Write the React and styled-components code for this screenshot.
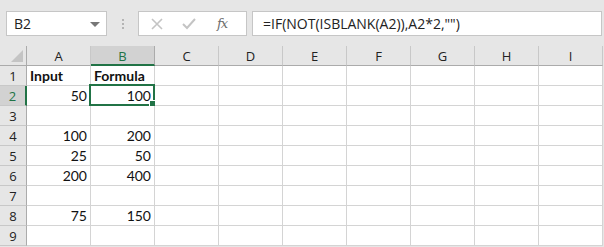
import React from 'react'
import styled, { createGlobalStyle } from 'styled-components'

const GlobalStyle = createGlobalStyle`
  html, body { margin: 0; padding: 0; background: #e6e6e6; }
  body { width: 604px; height: 247px; overflow: hidden; }
`

const GREEN = '#217346'
const COLS = ['A', 'B', 'C', 'D', 'E', 'F', 'G', 'H', 'I']
const ROWS = [
  ['Input', 'Formula'],
  ['50', '100'],
  ['', ''],
  ['100', '200'],
  ['25', '50'],
  ['200', '400'],
  ['', ''],
  ['75', '150'],
  ['', '']
]

const Sheet = styled.div`
  width: 604px;
  height: 247px;
  background: #e6e6e6;
  font-family: "Liberation Sans", Arial, sans-serif;
`

const Toolbar = styled.div`
  height: 46px;
  display: flex;
  align-items: flex-start;
  padding: 11px 2px 0 6px;
  box-sizing: border-box;
`

const NameBox = styled.div`
  width: 101px;
  height: 25px;
  box-sizing: border-box;
  background: #fff;
  border: 1px solid #c6c6c6;
  display: flex;
  align-items: center;
  justify-content: space-between;
  padding: 0 6px 0 7px;
  font-family: "Open Sans", "Noto Sans", sans-serif;
  font-size: 14px;
  color: #222;
`

const Caret = styled.span`
  width: 0;
  height: 0;
  border-left: 5px solid transparent;
  border-right: 5px solid transparent;
  border-top: 5px solid #777;
  margin-top: 1px;
`

const Dots = styled.div`
  width: 31px;
  height: 25px;
  display: flex;
  flex-direction: column;
  align-items: center;
  justify-content: center;
  gap: 2px;
  span {
    width: 2px;
    height: 2px;
    background: #b4b4b4;
  }
`

const FxButtons = styled.div`
  width: 109px;
  height: 25px;
  box-sizing: border-box;
  background: #fff;
  border: 1px solid #c6c6c6;
  display: flex;
  align-items: center;
  padding: 0 0 0 12px;
  gap: 19px;
`

const Fx = styled.span`
  font-family: "DejaVu Serif", "Liberation Serif", serif;
  font-style: italic;
  font-size: 13px;
  color: #6d6d6d;
  letter-spacing: -1px;
  margin-left: 2px;
`

const FormulaInput = styled.div`
  flex: 1;
  margin-left: 5px;
  height: 25px;
  box-sizing: border-box;
  background: #fff;
  border: 1px solid #c6c6c6;
  display: flex;
  align-items: center;
  padding-left: 10px;
  font-family: "Open Sans", "Noto Sans", sans-serif;
  font-size: 14px;
  color: #222;
  white-space: pre;
`

const Grid = styled.div`
  display: grid;
  grid-template-columns: 27px repeat(9, 64px);
  grid-auto-rows: 20px;
`

const Corner = styled.div`
  position: relative;
  background: #e6e6e6;
  border-right: 1px solid #ababab;
  border-bottom: 1px solid #ababab;
  &::after {
    content: '';
    position: absolute;
    right: 3px;
    bottom: 3px;
    width: 0;
    height: 0;
    border-left: 12px solid transparent;
    border-bottom: 12px solid #c4c4c4;
  }
`

const ColHead = styled.div`
  background: ${p => (p.$active ? '#d2d2d2' : '#e6e6e6')};
  border-right: 1px solid ${p => (p.$active ? '#ababab' : '#c8c8c8')};
  border-bottom: ${p => (p.$active ? `2px solid ${GREEN}` : '1px solid #ababab')};
  color: ${p => (p.$active ? GREEN : '#222')};
  font-family: "Open Sans", "Noto Sans", sans-serif;
  font-size: 13px;
  display: flex;
  align-items: center;
  justify-content: center;
  padding-top: ${p => (p.$active ? '1px' : '0')};
`

const RowHead = styled.div`
  background: ${p => (p.$active ? '#d2d2d2' : '#e6e6e6')};
  border-right: ${p => (p.$active ? `2px solid ${GREEN}` : '1px solid #ababab')};
  border-bottom: 1px solid #c8c8c8;
  color: ${p => (p.$active ? GREEN : '#222')};
  font-family: "Open Sans", "Noto Sans", sans-serif;
  font-size: 13px;
  display: flex;
  align-items: center;
  justify-content: center;
`

const Cell = styled.div`
  position: relative;
  background: #fff;
  border-right: 1px solid #d4d4d4;
  border-bottom: 1px solid #d4d4d4;
  display: flex;
  align-items: center;
  justify-content: ${p => (p.$text ? 'flex-start' : 'flex-end')};
  padding: 0 3px 0 3px;
  font-family: "Lato", "Liberation Sans", sans-serif;
  font-size: 14px;
  font-weight: ${p => (p.$text ? 700 : 400)};
  color: #111;
`

const Selection = styled.div`
  position: absolute;
  left: -2px;
  top: -2px;
  right: -1px;
  bottom: -1px;
  border: 2px solid ${GREEN};
  pointer-events: none;
  &::after {
    content: '';
    position: absolute;
    right: -4px;
    bottom: -4px;
    width: 6px;
    height: 6px;
    background: ${GREEN};
    border: 1px solid #fff;
  }
`

const CrossIcon = () => (
  <svg width="12" height="12" viewBox="0 0 12 12">
    <path d="M1 1 L11 11 M11 1 L1 11" stroke="#c4c4c4" strokeWidth="1.6" fill="none" />
  </svg>
)

const CheckIcon = () => (
  <svg width="14" height="12" viewBox="0 0 14 12">
    <path d="M1 6 L5 10 L13 1" stroke="#c4c4c4" strokeWidth="2" fill="none" />
  </svg>
)

export default function App() {
  return (
    <Sheet>
      <GlobalStyle />
      <Toolbar>
        <NameBox>
          B2
          <Caret />
        </NameBox>
        <Dots>
          <span />
          <span />
          <span />
        </Dots>
        <FxButtons>
          <CrossIcon />
          <CheckIcon />
          <Fx>fx</Fx>
        </FxButtons>
        <FormulaInput>{'=IF(NOT(ISBLANK(A2)),A2*2,"")'}</FormulaInput>
      </Toolbar>
      <Grid>
        <Corner />
        {COLS.map(c => (
          <ColHead key={c} $active={c === 'B'}>{c}</ColHead>
        ))}
        {ROWS.map((row, r) => (
          <React.Fragment key={r}>
            <RowHead $active={r === 1}>{r + 1}</RowHead>
            {COLS.map((c, ci) => {
              const val = row[ci] || ''
              const isText = val !== '' && isNaN(Number(val))
              return (
                <Cell key={c} $text={isText}>
                  {val}
                  {r === 1 && c === 'B' && <Selection />}
                </Cell>
              )
            })}
          </React.Fragment>
        ))}
      </Grid>
    </Sheet>
  )
}
